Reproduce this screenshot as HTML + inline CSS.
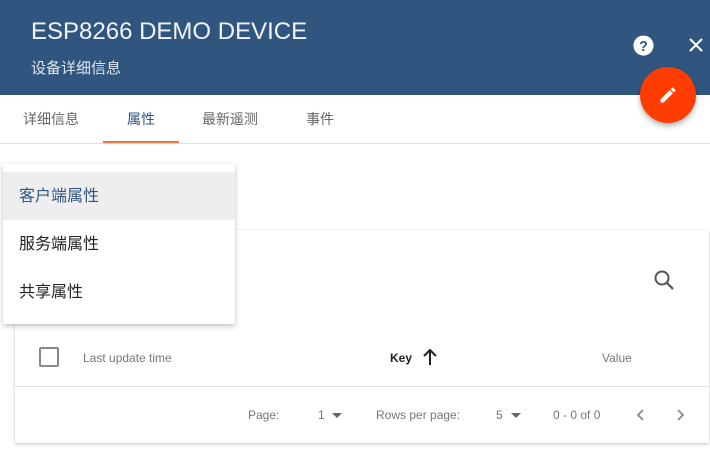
<!DOCTYPE html>
<html><head><meta charset="utf-8"><style>
*{margin:0;padding:0;box-sizing:border-box}
body{width:710px;height:453px;overflow:hidden;background:#fff;font-family:"Liberation Sans","Noto Sans CJK SC",sans-serif;position:relative}
.hdr{position:absolute;left:0;top:0;width:710px;height:95px;background:#305680;color:#fff}
.t1{position:absolute;left:31px;top:18px;font-size:24px;color:#f0f3f7}
.t2{position:absolute;left:31px;top:57px;font-size:15px;color:#dfe6ef}
.abs{position:absolute}
.tab{position:absolute;top:109px;font-size:14px;color:#666}
.card{position:absolute;left:15px;top:230px;width:694px;height:213px;background:#fff;box-shadow:0 1px 3px rgba(0,0,0,.25)}
.menu{position:absolute;left:3px;top:164px;width:232px;height:160px;background:#fff;box-shadow:0 2px 5px rgba(0,0,0,.25)}
.mi{position:absolute;left:0;width:232px;height:48px;line-height:50px;padding-left:16px;font-size:16px;color:#222}
.sm{position:absolute;font-size:12px;color:#777}
</style></head><body>
<div class="hdr">
<div class="t1">ESP8266 DEMO DEVICE</div>
<div class="t2">设备详细信息</div>
<svg class="abs" style="left:632px;top:34px" width="23" height="23" viewBox="0 0 24 24"><circle cx="12" cy="12" r="10.5" fill="#fff"/><text x="12" y="17.5" text-anchor="middle" font-size="15" font-weight="bold" fill="#305680" font-family="Liberation Sans">?</text></svg>
<svg class="abs" style="left:688px;top:37px" width="16" height="16" viewBox="0 0 16 16"><path d="M2 2L14 14M14 2L2 14" stroke="#fff" stroke-width="2"/></svg>
</div>
<div class="abs" style="left:640px;top:67px;width:56px;height:56px;border-radius:50%;background:#ff3d00;box-shadow:0 3px 6px rgba(0,0,0,.3)"></div>
<svg class="abs" style="left:658px;top:85px" width="20" height="20" viewBox="0 0 24 24"><path d="M3 17.25V21h3.75L17.8 9.94l-3.75-3.75L3 17.25zM20.7 7.04a1 1 0 000-1.41l-2.34-2.34a1 1 0 00-1.41 0l-1.830 1.83 3.75 3.75 1.83-1.83z" fill="#fff"/></svg>
<div class="tab" style="left:23px">详细信息</div>
<div class="tab" style="left:127px;color:#305680">属性</div>
<div class="tab" style="left:202px">最新遥测</div>
<div class="tab" style="left:306px">事件</div>
<div class="abs" style="left:103px;top:141px;width:76px;height:2px;background:#ff7043"></div>
<div class="abs" style="left:0;top:143px;width:710px;height:1px;background:#e0e0e0"></div>
<div class="card">
<svg class="abs" style="left:637px;top:38px" width="24" height="24" viewBox="0 0 24 24"><circle cx="10" cy="10" r="6.5" stroke="#555" stroke-width="2" fill="none"/><path d="M14.8 14.8L21 21" stroke="#555" stroke-width="2.2"/></svg>
<div class="abs" style="left:24px;top:117px;width:20px;height:20px;border:2px solid #888;border-radius:2px"></div>
<div class="sm" style="left:68px;top:121px">Last update time</div>
<div class="sm" style="left:375px;top:121px;color:#222;font-weight:bold">Key</div>
<svg class="abs" style="left:406px;top:118px" width="18" height="18" viewBox="0 0 18 18"><path d="M9 17V2M3 8L9 2L15 8" stroke="#222" stroke-width="2" fill="none"/></svg>
<div class="sm" style="left:587px;top:121px">Value</div>
<div class="abs" style="left:0;top:156px;width:694px;height:1px;background:#e0e0e0"></div>
<div class="sm" style="left:233px;top:178px">Page:</div>
<div class="sm" style="left:303px;top:178px">1</div>
<div class="abs" style="left:317px;top:183px;border:5px solid transparent;border-top-color:#666;border-bottom:0"></div>
<div class="sm" style="left:361px;top:178px">Rows per page:</div>
<div class="sm" style="left:481px;top:178px">5</div>
<div class="abs" style="left:496px;top:183px;border:5px solid transparent;border-top-color:#666;border-bottom:0"></div>
<div class="sm" style="left:538px;top:178px">0 - 0 of 0</div>
<svg class="abs" style="left:619px;top:177px" width="14" height="16" viewBox="0 0 14 16"><path d="M9 3L4 8L9 13" stroke="#888" stroke-width="1.8" fill="none"/></svg>
<svg class="abs" style="left:658px;top:177px" width="14" height="16" viewBox="0 0 14 16"><path d="M5 3L10 8L5 13" stroke="#888" stroke-width="1.8" fill="none"/></svg>
</div>
<div class="menu">
<div class="mi" style="top:8px;background:#eeeeee;color:#305680">客户端属性</div>
<div class="mi" style="top:56px">服务端属性</div>
<div class="mi" style="top:104px">共享属性</div>
</div>
</body></html>
